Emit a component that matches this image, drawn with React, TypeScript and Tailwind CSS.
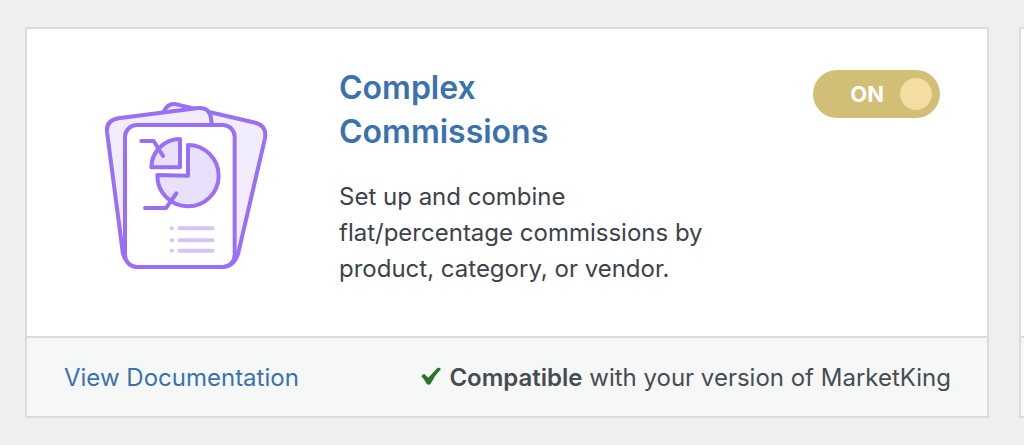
import { useState } from "react";

function ReportIcon() {
  return (
    <svg
      viewBox="0 0 555 570"
      className="mt-6 w-[185px] shrink-0"
      fill="none"
      stroke="#996ff7"
      strokeWidth="12"
      strokeLinecap="round"
      strokeLinejoin="round"
      aria-hidden="true"
    >
      {/* Back sheets */}
      <path
        d="M206 66Q218 38 244 43L484 99Q516 109 510 145L430 488Q420 528 382 531H130L206 66Z"
        fill="#f2edfe"
      />
      <path
        d="M70 85L310 54Q341 51 347 80L352 110L380 531H124Q88 520 83 485L36 125Q33 91 70 85Z"
        fill="#f2edfe"
      />
      {/* Front sheet */}
      <rect x="90" y="105" width="329" height="426" rx="36" fill="#fff" />
      {/* Pie chart */}
      <path d="M255 147V232H169A86 86 0 0 1 255 147Z" fill="#e9e1fb" />
      <path d="M279 165A92 92 0 1 1 187 255L279 257Z" fill="#e9e1fb" />
      <path d="M139 153H176L204 198" />
      <path d="M150 354H213L244 310" />
      {/* Legend */}
      <g stroke="#d3c5f8">
        <path d="M230 415h1M254 415h99" />
        <path d="M230 451h1M254 451h99" />
        <path d="M230 482h1M254 482h99" />
      </g>
    </svg>
  );
}

function Toggle() {
  const [on, setOn] = useState(true);

  return (
    <button
      type="button"
      role="switch"
      aria-checked={on}
      aria-label="Complex Commissions"
      onClick={() => setOn(!on)}
      className={`mt-1 ml-auto flex h-12 w-[127px] shrink-0 items-center justify-end gap-4 rounded-full pr-2 text-[22px] font-bold text-white ${
        on ? "bg-[#d2bf76]" : "flex-row-reverse bg-gray-400"
      }`}
    >
      <span>{on ? "ON" : "OFF"}</span>
      <span className="size-8 rounded-full bg-[#f3dda1]" />
    </button>
  );
}

export default function App() {
  return (
    <main className="flex min-h-screen items-start overflow-hidden bg-[#efefef] pt-[27px] pl-[25px] font-['Inter',sans-serif]">
      <div className="flex flex-1 items-stretch gap-[30px]">
        <article className="flex-1 border-2 border-[#dcdcde] bg-white">
          <div className="flex items-start pt-[37px] pr-[47px] pb-[49px] pl-[68px]">
            <ReportIcon />
            <div className="ml-[59px] w-[380px]">
              <h3 className="text-[32px] leading-[44px] font-semibold text-[#3a72b0]">
                <a href="#complex-commissions">
                  Complex
                  <br />
                  Commissions
                </a>
              </h3>
              <p className="mt-[25px] text-[24px] leading-[36px] text-[#3c434a]">
                Set up and combine flat/percentage commissions by product, category, or vendor.
              </p>
            </div>
            <Toggle />
          </div>

          <footer className="flex h-20 items-center justify-between border-t-2 border-[#dcdcde] bg-[#f6f7f7] pt-0.5 pr-9 pl-[37px] text-[24px]">
            <a href="#documentation" className="text-[#3a72b0]">
              View Documentation
            </a>
            <div className="flex items-center gap-2 text-[#464c53]">
              <svg viewBox="0 0 60 54" className="mb-1 w-5" fill="#2a7524" aria-hidden="true">
                <path d="M1 28Q4 22 10 21L22 32L49 3Q54 0 60 6Q42 24 29 50Q23 56 17 50Q10 36 1 28Z" />
              </svg>
              <span>
                <strong className="font-semibold">Compatible</strong> with your version of MarketKing
              </span>
            </div>
          </footer>
        </article>

        {/* Next card in the list, running off the edge */}
        <article className="flex w-[5px] flex-col border-y-2 border-l-2 border-[#dcdcde] bg-white">
          <div className="flex-1" />
          <div className="h-20 border-t-2 border-[#dcdcde] bg-[#f6f7f7]" />
        </article>
      </div>
    </main>
  );
}
